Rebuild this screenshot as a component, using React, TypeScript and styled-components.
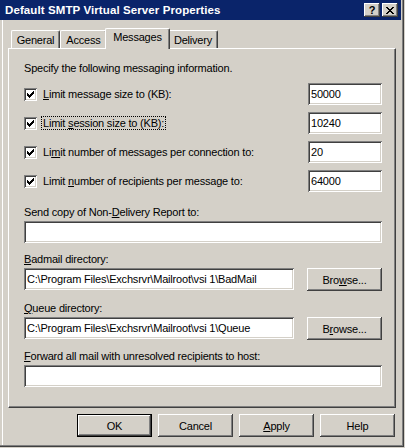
import styled, { createGlobalStyle } from 'styled-components';

const FACE = '#d4d0c8';
const SHADOW = '#808080';
const DARK = '#404040';

const GlobalStyle = createGlobalStyle`
  html, body {
    margin: 0;
    padding: 0;
    background: ${FACE};
  }
  * {
    box-sizing: border-box;
  }
`;

const Window = styled.div`
  width: 404px;
  height: 447px;
  padding: 0 3px 3px 0;
  background: ${FACE};
  font-family: "Liberation Sans", Arial, sans-serif;
  font-size: 11px;
  letter-spacing: -0.2px;
  color: #000;
  box-shadow: inset -1px -1px ${DARK}, inset -2px -2px ${SHADOW}, inset 2px 0 ${FACE}, inset 3px 0 #fff;
`;

const TitleBar = styled.div`
  height: 20px;
  background: #0a246a;
  display: flex;
  align-items: center;
  padding: 0 3px 0 5px;
`;

const Title = styled.div`
  flex: 1;
  color: #fff;
  font-weight: bold;
  font-size: 11.5px;
  letter-spacing: 0.1px;
`;

const CaptionButtons = styled.div`
  display: flex;
  gap: 2px;
`;

const CaptionButton = styled.div`
  width: 16px;
  height: 14px;
  background: ${FACE};
  box-shadow: inset -1px -1px ${DARK}, inset 1px 1px #fff, inset -2px -2px ${SHADOW}, inset 2px 2px ${FACE};
  display: flex;
  align-items: center;
  justify-content: center;
  font-weight: bold;
  font-size: 11px;
  line-height: 14px;
`;

const Body = styled.div`
  padding: 8px 0 0 8px;
`;

const TabStrip = styled.div`
  display: flex;
  align-items: flex-end;
  height: 20px;
  padding-left: 3px;
`;

const Tab = styled.div<{ $w: number; $active?: boolean }>`
  position: relative;
  z-index: ${p => (p.$active ? 1 : 0)};
  width: ${p => p.$w + (p.$active ? 4 : 0)}px;
  height: ${p => (p.$active ? 21 : 18)}px;
  margin: ${p => (p.$active ? '0 -2px -1px' : '0')};
  padding-top: ${p => (p.$active ? 2 : 3)}px;
  background: ${FACE};
  border-top: 1px solid #fff;
  border-left: 1px solid #fff;
  border-right: 1px solid ${DARK};
  border-radius: 2px 2px 0 0;
  box-shadow: inset -1px 0 ${SHADOW};
  text-align: center;
  line-height: 13px;
`;

const Panel = styled.div`
  width: 388px;
  height: 360px;
  padding: 12px 13px 0 15px;
  border-top: 1px solid #fff;
  border-left: 1px solid #fff;
  border-right: 1px solid ${DARK};
  border-bottom: 1px solid ${DARK};
  box-shadow: inset -1px -1px ${SHADOW};
`;

const Intro = styled.div`
  height: 14px;
  line-height: 14px;
  margin-bottom: 8px;
`;

const LimitList = styled.div`
  display: flex;
  flex-direction: column;
  gap: 7px;
`;

const LimitRow = styled.div`
  display: flex;
  align-items: center;
  height: 22px;
`;

const CheckBox = styled.div`
  width: 13px;
  height: 13px;
  flex: none;
  background: #fff;
  box-shadow: inset 1px 1px ${SHADOW}, inset -1px -1px #fff, inset 2px 2px ${DARK}, inset -2px -2px ${FACE};
  display: flex;
  align-items: center;
  justify-content: center;
  margin-right: 5px;
`;

const CheckLabel = styled.span<{ $focus?: boolean }>`
  flex: 1;
  line-height: 13px;
  span {
    outline: ${p => (p.$focus ? '1px dotted #000' : 'none')};
    padding: 0 1px;
  }
`;

const Field = styled.input<{ $w?: number }>`
  appearance: none;
  display: block;
  width: ${p => (p.$w ? `${p.$w}px` : '100%')};
  height: 22px;
  margin: 0;
  padding: 0 3px;
  border: none;
  outline: none;
  background: #fff;
  font: 11px "Liberation Sans", Arial, sans-serif;
  letter-spacing: -0.2px;
  color: #000;
  box-shadow: inset 1px 1px ${SHADOW}, inset -1px -1px #fff, inset 2px 2px ${DARK}, inset -2px -2px ${FACE};
`;

const Label = styled.div<{ $top: number }>`
  height: 14px;
  line-height: 14px;
  margin-top: ${p => p.$top}px;
  margin-bottom: 2px;
`;

const PathRow = styled.div`
  display: flex;
  justify-content: space-between;
  align-items: flex-start;
  height: 23px;
`;

const Button = styled.button<{ $default?: boolean }>`
  width: 75px;
  height: 23px;
  padding: 0;
  margin: 0;
  background: ${FACE};
  font: 11px "Liberation Sans", Arial, sans-serif;
  letter-spacing: -0.2px;
  color: #000;
  border: ${p => (p.$default ? '1px solid #000' : 'none')};
  box-shadow: inset -1px -1px ${DARK}, inset 1px 1px #fff, inset -2px -2px ${SHADOW}, inset 2px 2px ${FACE};
`;

const ButtonBar = styled.div`
  display: flex;
  justify-content: flex-end;
  gap: 6px;
  width: 388px;
  padding-right: 1px;
  margin-top: 6px;
`;

const CheckMark = () => (
  <svg width="7" height="7" viewBox="0 0 7 7" shapeRendering="crispEdges">
    <path
      fill="#000"
      d="M6 0h1v3h-1zM5 1h1v3h-1zM4 2h1v3h-1zM3 3h1v3h-1zM2 4h1v3h-1zM1 3h1v3h-1zM0 2h1v3h-1z"
    />
  </svg>
);

const CloseGlyph = () => (
  <svg width="8" height="7" viewBox="0 0 8 7" shapeRendering="crispEdges">
    <path fill="#000" d="M0 0h2v1h-2zM6 0h2v1h-2zM1 1h2v1h-2zM5 1h2v1h-2zM2 2h4v1h-4zM3 3h2v1h-2zM2 4h4v1h-4zM1 5h2v1h-2zM5 5h2v1h-2zM0 6h2v1h-2zM6 6h2v1h-2z" />
  </svg>
);

const limits = [
  { before: '', key: 'L', after: 'imit message size to (KB):', value: '50000' },
  { before: 'Limit ', key: 's', after: 'ession size to (KB):', value: '10240', focus: true },
  { before: 'Li', key: 'm', after: 'it number of messages per connection to:', value: '20' },
  { before: 'Limit ', key: 'n', after: 'umber of recipients per message to:', value: '64000' },
];

const tabs = [
  { name: 'General', w: 49 },
  { name: 'Access', w: 47 },
  { name: 'Messages', w: 61, active: true },
  { name: 'Delivery', w: 50 },
];

export default function App() {
  return (
    <>
      <GlobalStyle />
      <Window>
        <TitleBar>
          <Title>Default SMTP Virtual Server Properties</Title>
          <CaptionButtons>
            <CaptionButton>?</CaptionButton>
            <CaptionButton>
              <CloseGlyph />
            </CaptionButton>
          </CaptionButtons>
        </TitleBar>
        <Body>
          <TabStrip>
            {tabs.map(t => (
              <Tab key={t.name} $w={t.w} $active={t.active}>
                {t.name}
              </Tab>
            ))}
          </TabStrip>
          <Panel>
            <Intro>Specify the following messaging information.</Intro>
            <LimitList>
              {limits.map(l => (
                <LimitRow key={l.value}>
                  <CheckBox>
                    <CheckMark />
                  </CheckBox>
                  <CheckLabel $focus={l.focus}>
                    <span>
                      {l.before}
                      <u>{l.key}</u>
                      {l.after}
                    </span>
                  </CheckLabel>
                  <Field $w={74} readOnly value={l.value} />
                </LimitRow>
              ))}
            </LimitList>
            <Label $top={13}>
              Send copy of Non-<u>D</u>elivery Report to:
            </Label>
            <Field readOnly value="" />
            <Label $top={9}>
              <u>B</u>admail directory:
            </Label>
            <PathRow>
              <Field $w={270} readOnly value={'C:\\Program Files\\Exchsrvr\\Mailroot\\vsi 1\\BadMail'} />
              <Button>
                Bro<u>w</u>se...
              </Button>
            </PathRow>
            <Label $top={10}>
              <u>Q</u>ueue directory:
            </Label>
            <PathRow>
              <Field $w={270} readOnly value={'C:\\Program Files\\Exchsrvr\\Mailroot\\vsi 1\\Queue'} />
              <Button>
                B<u>r</u>owse...
              </Button>
            </PathRow>
            <Label $top={9}>
              <u>F</u>orward all mail with unresolved recipients to host:
            </Label>
            <Field readOnly value="" />
          </Panel>
          <ButtonBar>
            <Button $default>OK</Button>
            <Button>Cancel</Button>
            <Button>
              <u>A</u>pply
            </Button>
            <Button>Help</Button>
          </ButtonBar>
        </Body>
      </Window>
    </>
  );
}
